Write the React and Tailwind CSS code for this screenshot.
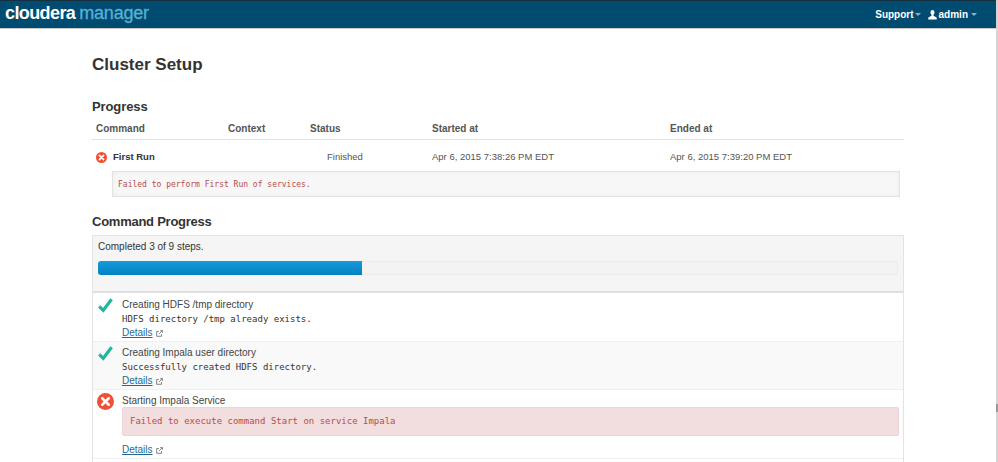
import React from 'react';

const sans = { fontFamily: '"Liberation Sans", Arial, sans-serif' };

function ErrorIcon({ size }) {
  return (
    <svg width={size} height={size} viewBox="0 0 20 20" className="shrink-0">
      <circle cx="10" cy="10" r="10" fill="#ee5135" />
      <path d="M6.2 6.2 13.8 13.8M13.8 6.2 6.2 13.8" stroke="#fff" strokeWidth="3" strokeLinecap="round" />
    </svg>
  );
}

function CheckIcon() {
  return (
    <svg width="15" height="15" viewBox="0 0 15 15" className="shrink-0">
      <path d="M1.2 8.4 5.200 12.400 13.600 1.200" fill="none" stroke="#1fb89a" strokeWidth="3.200" />
    </svg>
  );
}

function Details() {
  return (
    <div className="flex items-center gap-[3px] text-[10px] leading-[14px]">
      <a className="text-[#1f6a8e] underline">Details</a>
      <svg width="7" height="7" viewBox="0 0 7 7" fill="none" stroke="#666" strokeWidth="0.8">
        <path d="M5.5 4.2V6.3H.7V1.5H2.8M3 4 6.3.7M4.2.6H6.4V2.8" />
      </svg>
    </div>
  );
}

function Step({ title, message, gray }) {
  return (
    <div className={`flex h-[48px] border-b border-[#f0f0f0] ${gray ? 'bg-[#f9f9f9]' : 'bg-white'}`}>
      <div className="w-[29px] pl-[5px] pt-[4px]">
        <CheckIcon />
      </div>
      <div className="pt-[4px]">
        <div className="text-[10px] leading-[14px] text-[#444]">{title}</div>
        <div className="font-['DejaVu_Sans_Mono'] text-[9px] leading-[14px] text-[#333]">{message}</div>
        <div><Details /></div>
      </div>
    </div>
  );
}

export default function App() {
  return (
    <div className="relative h-[462px] bg-white border-r-2 border-[#d4d4d4]" style={sans}>
      <div className="h-[29px] flex items-center justify-between bg-[#004c70] border-t border-[#17303f] border-b border-b-[#c9c9c9] pl-[5px] pr-[19px]">
        <div className="text-[18px] font-bold tracking-[-0.6px] leading-none pb-[3px]">
          <span className="text-white">cloudera</span>
          <span className="text-[#56b1d9] font-normal tracking-[-0.2px] ml-[4px] [-webkit-text-stroke:0.3px_#56b1d9]">manager</span>
        </div>
        <div className="flex items-center text-[10px] font-bold text-white">
          <span>Support</span>
          <span className="ml-[1px] border-x-[3px] border-x-transparent border-t-[3px] border-t-[#8fb0c2]"></span>
          <svg width="9" height="10" viewBox="0 0 9 10" className="ml-[7px] mr-[2px]" fill="#fff">
            <path d="M4.500 0C3.200 0 2.500 1 2.500 2.300c0 1 .5 2 1 2.500v1L.3 7.400V9.600h8.400V7.400L5.500 5.800v-1c.5-.5 1-1.500 1-2.500C6.500 1 5.800 0 4.500 0Z" />
          </svg>
          <span>admin</span>
          <span className="ml-[3px] border-x-[3px] border-x-transparent border-t-[3px] border-t-[#8fb0c2]"></span>
        </div>
      </div>

      <div className="ml-[92px] w-[812px]">
        <h1 className="text-[17px] font-bold text-[#333] leading-[20px] mt-[26px]">Cluster Setup</h1>
        <h2 className="text-[13px] tracking-[-0.1px] font-bold text-[#333] leading-[16px] mt-[24px]">Progress</h2>

        <div className="grid grid-cols-[132px_82px_122px_238px_1fr] h-[25px] items-center pt-[2px] border-b border-[#e2e2e2] pl-[4px] text-[10px] font-bold text-[#555]">
          <div>Command</div>
          <div>Context</div>
          <div>Status</div>
          <div>Started at</div>
          <div>Ended at</div>
        </div>
        <div className="grid grid-cols-[132px_82px_122px_238px_1fr] h-[31px] pt-[3px] items-center pl-[4px] text-[9.5px] text-[#555]">
          <div className="flex items-center gap-[6px] font-bold text-[#333]">
            <ErrorIcon size={11} />
            First Run
          </div>
          <div></div>
          <div className="pl-[17px]">Finished</div>
          <div>Apr 6, 2015 7:38:26 PM EDT</div>
          <div>Apr 6, 2015 7:39:20 PM EDT</div>
        </div>
        <div className="ml-[20px] mr-[4px] h-[26px] flex items-center pt-[1px] px-[5px] bg-[#f7f7f7] border border-[#e3e3e3] shadow-[inset_0_0_4px_rgba(0,0,0,0.05)] font-['DejaVu_Sans_Mono'] text-[8px] text-[#b94a48]">
          Failed to perform First Run of services.
        </div>

        <h2 className="text-[13px] tracking-[-0.25px] font-bold text-[#333] leading-[16px] mt-[17px]">Command Progress</h2>

        <div className="mt-[5px] border-x border-t border-[#e3e3e3]">
          <div className="h-[57px] bg-[#f5f5f5] border-b-2 border-[#e0e0e0] px-[5px] pt-[4px]">
            <div className="text-[10px] leading-[14px] text-[#333]">Completed 3 of 9 steps.</div>
            <div className="mt-[7px] h-[14px] rounded-[3px] bg-[#f3f3f3] shadow-[inset_0_0_0_1px_#ececec] overflow-hidden">
              <div className="h-full w-[33%] bg-gradient-to-b from-[#149bdf] to-[#0480be]"></div>
            </div>
          </div>
          <div className="h-[1px] bg-white"></div>
          <Step title="Creating HDFS /tmp directory" message="HDFS directory /tmp already exists." />
          <Step gray title="Creating Impala user directory" message="Successfully created HDFS directory." />
          <div className="flex h-[69px] border-b border-[#f0f0f0] bg-white">
            <div className="w-[29px] pl-[4px] pt-[3px]">
              <ErrorIcon size={17} />
            </div>
            <div className="flex-1 pt-[4px]">
              <div className="text-[10px] leading-[13px] text-[#444]">Starting Impala Service</div>
              <div className="mr-[4px] h-[29px] flex items-center pt-[1px] px-[7px] rounded-[2px] bg-[#f2dede] border border-[#eed3d7] font-['DejaVu_Sans_Mono'] text-[9px] text-[#b94a48]">
                Failed to execute command Start on service Impala
              </div>
              <div className="mt-[7px]"><Details /></div>
            </div>
          </div>
          <div className="h-[3px] bg-white"></div>
        </div>
      </div>
      <div className="absolute right-[-2px] top-[404px] h-[8px] w-[2px] bg-[#999]"></div>
    </div>
  );
}
